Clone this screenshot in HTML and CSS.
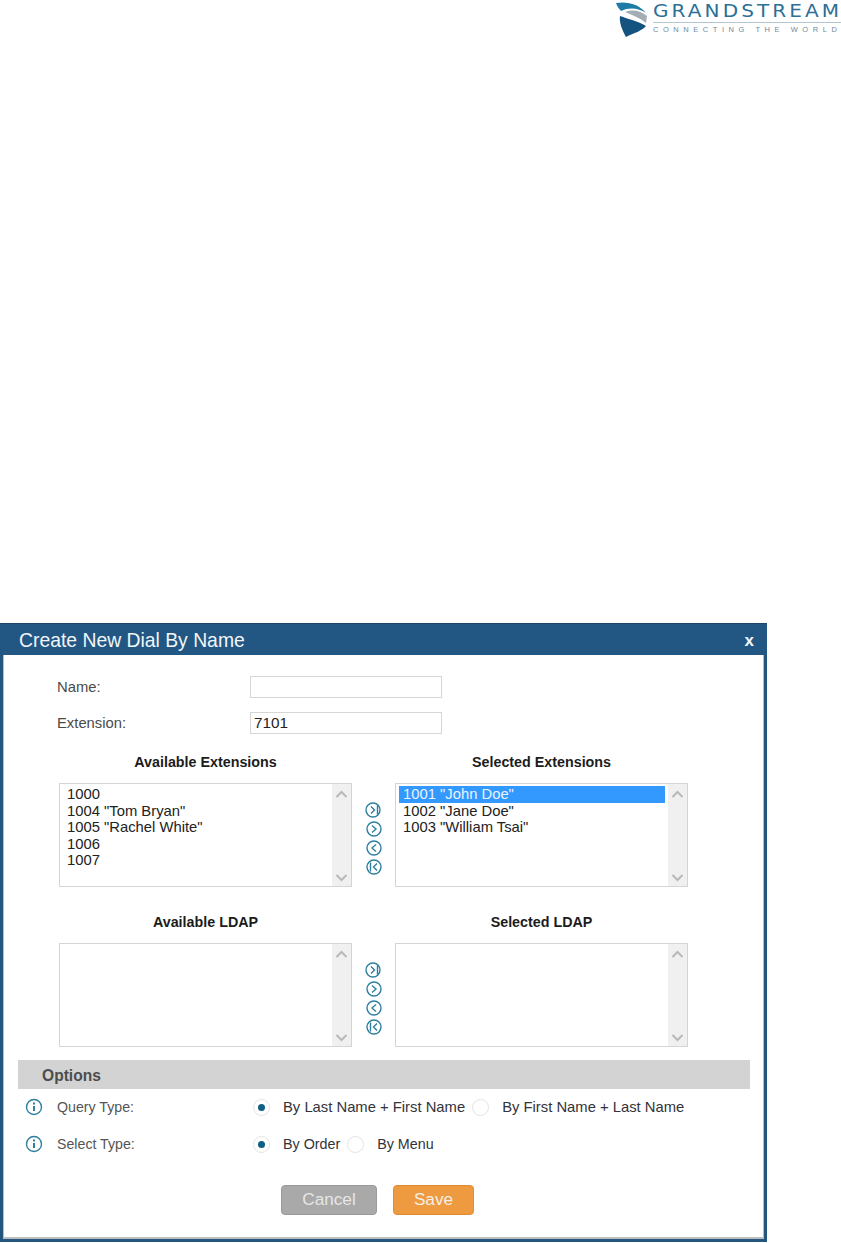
FILE: index.html
```html
<!DOCTYPE html>
<html lang="en">
<head>
<meta charset="utf-8">
<title>Create New Dial By Name</title>
<link rel="stylesheet" href="styles.css">
</head>
<body>
<header class="brand">
  <svg class="brand-mark" width="37" height="37" viewBox="0 0 37 37">
    <path d="M2 2 C13 0 25 3 32 12 C25 7 15 6 7 10 C5 8 3 5 2 2Z" fill="#1d7ba6"/>
    <path d="M11 11 C19 8 27 10 33 15 L32 22 C26 17 18 14 11 11Z" fill="#a3adb4"/>
    <path d="M6 15 C14 18 24 20 32 25 C28 30 20 32 12 36 C8 29 5 21 6 15Z" fill="#14527f"/>
  </svg>
  <div class="brand-text">
    <div class="brand-name">GRANDSTREAM</div>
    <div class="brand-rule"></div>
    <div class="brand-tag">CONNECTING THE WORLD</div>
  </div>
</header>

<main class="dialog">
  <div class="dialog-title">
    <span>Create New Dial By Name</span>
    <span class="dialog-close">x</span>
  </div>
  <div class="dialog-body">
    <div class="field"><label class="field-label">Name:</label><div class="text-input"></div></div>
    <div class="field"><label class="field-label">Extension:</label><div class="text-input">7101</div></div>

    <section class="transfer">
      <h3 class="transfer-title">Available Extensions</h3>
      <div></div>
      <h3 class="transfer-title">Selected Extensions</h3>
      <div class="listbox">
        <ul class="list">
          <li>1000</li><li>1004 "Tom Bryan"</li><li>1005 "Rachel White"</li><li>1006</li><li>1007</li>
        </ul>
        <div class="scrollbar">
          <svg width="17" height="104" viewBox="0 0 17 104"><path class="chev" d="M3.500 13 L8.500 8 L13.500 13M3.500 91 L8.500 96 L13.500 91"/></svg>
        </div>
      </div>
      <div class="movers">
        <svg width="18" height="18" viewBox="0 0 18 18"><circle class="mv" cx="8" cy="9" r="7"/><path class="mv" d="M6 5.500 L9.500 9 L6 12.500M12.500 4.500V13.500"/></svg>
        <svg width="18" height="18" viewBox="0 0 18 18"><circle class="mv" cx="9" cy="9" r="7"/><path class="mv" d="M7 5.500 L11 9 L7 12.500"/></svg>
        <svg width="18" height="18" viewBox="0 0 18 18"><circle class="mv" cx="9" cy="9" r="7"/><path class="mv" d="M11 5.500 L7 9 L11 12.500"/></svg>
        <svg width="18" height="18" viewBox="0 0 18 18"><circle class="mv" cx="9" cy="9" r="7"/><path class="mv" d="M12 5.500 L8.500 9 L12 12.500M5.500 4.500V13.500"/></svg>
      </div>
      <div class="listbox">
        <ul class="list">
          <li class="selected">1001 "John Doe"</li><li>1002 "Jane Doe"</li><li>1003 "William Tsai"</li>
        </ul>
        <div class="scrollbar">
          <svg width="17" height="104" viewBox="0 0 17 104"><path class="chev" d="M3.500 13 L8.500 8 L13.500 13M3.500 91 L8.500 96 L13.500 91"/></svg>
        </div>
      </div>
    </section>

    <section class="transfer transfer-ldap">
      <h3 class="transfer-title">Available LDAP</h3>
      <div></div>
      <h3 class="transfer-title">Selected LDAP</h3>
      <div class="listbox">
        <ul class="list"></ul>
        <div class="scrollbar">
          <svg width="17" height="104" viewBox="0 0 17 104"><path class="chev" d="M3.500 13 L8.500 8 L13.500 13M3.500 91 L8.500 96 L13.500 91"/></svg>
        </div>
      </div>
      <div class="movers">
        <svg width="18" height="18" viewBox="0 0 18 18"><circle class="mv" cx="8" cy="9" r="7"/><path class="mv" d="M6 5.500 L9.500 9 L6 12.500M12.500 4.500V13.500"/></svg>
        <svg width="18" height="18" viewBox="0 0 18 18"><circle class="mv" cx="9" cy="9" r="7"/><path class="mv" d="M7 5.500 L11 9 L7 12.500"/></svg>
        <svg width="18" height="18" viewBox="0 0 18 18"><circle class="mv" cx="9" cy="9" r="7"/><path class="mv" d="M11 5.500 L7 9 L11 12.500"/></svg>
        <svg width="18" height="18" viewBox="0 0 18 18"><circle class="mv" cx="9" cy="9" r="7"/><path class="mv" d="M12 5.500 L8.500 9 L12 12.500M5.500 4.500V13.500"/></svg>
      </div>
      <div class="listbox">
        <ul class="list"></ul>
        <div class="scrollbar">
          <svg width="17" height="104" viewBox="0 0 17 104"><path class="chev" d="M3.500 13 L8.500 8 L13.500 13M3.500 91 L8.500 96 L13.500 91"/></svg>
        </div>
      </div>
    </section>

    <div class="options-bar">Options</div>

    <div class="option-row option-row-first">
      <svg class="info" width="18" height="18" viewBox="0 0 18 18"><circle class="mv" cx="9" cy="9" r="7.500"/><path class="info-i" d="M9 8V13M9 4.500V6.500"/></svg>
      <span class="option-label">Query Type:</span>
      <span class="radio radio-on"></span><span class="radio-text">By Last Name + First Name</span>
      <span class="radio radio-second"></span><span class="radio-text radio-text-second">By First Name + Last Name</span>
    </div>
    <div class="option-row option-row-narrow">
      <svg class="info" width="18" height="18" viewBox="0 0 18 18"><circle class="mv" cx="9" cy="9" r="7.500"/><path class="info-i" d="M9 8V13M9 4.500V6.500"/></svg>
      <span class="option-label">Select Type:</span>
      <span class="radio radio-on"></span><span class="radio-text">By Order</span>
      <span class="radio radio-second"></span><span class="radio-text radio-text-second">By Menu</span>
    </div>

    <div class="actions">
      <div class="btn btn-cancel">Cancel</div>
      <div class="btn btn-save">Save</div>
    </div>
  </div>
</main>
</body>
</html>
```
FILE: styles.css
```css
* { box-sizing: border-box; }
html, body { margin: 0; padding: 0; }
body {
  width: 841px;
  height: 1243px;
  overflow: hidden;
  background: #fff;
  font-family: "Liberation Sans", Arial, sans-serif;
  color: #2a2a2a;
}

.brand {
  height: 623px;
  padding: 1px 0 0 614px;
  display: flex;
  align-items: flex-start;
  gap: 2px;
}
.brand-mark { flex: none; }
.brand-text { width: 188px; padding-top: 2px; }
.brand-name {
  font-family: "DejaVu Sans", sans-serif;
  font-size: 17px;
  line-height: 17px;
  letter-spacing: 2.6px;
  color: #2c6f97;
  white-space: nowrap;
  transform: scaleX(1.18);
  transform-origin: left center;
}
.brand-rule { height: 1px; margin: 2px 0 3px; width: 188px; background: #b5c6d0; }
.brand-tag {
  font-size: 7.500px;
  line-height: 8px;
  letter-spacing: 4.550px;
  color: #6f8a9a;
  white-space: nowrap;
}

.dialog {
  width: 767px;
  height: 619px;
  background: #fff;
  border: 3px solid #23557f;
  border-top: 0;
  border-bottom-width: 3px;
  box-shadow: inset 0 -2px 0 #bdbdbd, inset -1px 0 0 #bdbdbd, inset 1px 0 0 #bdbdbd;
}
.dialog-title {
  height: 32px;
  margin: 0 -3px;
  padding: 4px 13px 0 19px;
  background: #235783;
  border-top: 1px solid #1d4467;
  color: #f2f6f9;
  font-size: 19.350px;
  line-height: 24px;
  display: flex;
  justify-content: space-between;
}
.dialog-close { font-size: 17px; font-weight: bold; padding-top: 1px; }
.dialog-body { padding: 21px 0 0 15px; }

.field { display: flex; align-items: center; height: 21px; margin-bottom: 15px; }
.field-label { width: 232px; padding-left: 39px; font-size: 14.800px; color: #4a4a4a; }
.text-input {
  width: 192px;
  height: 22px;
  border: 1px solid #d6d6d6;
  padding-left: 3px;
  font-size: 15.300px;
  line-height: 19px;
  color: #222;
}

.transfer {
  display: grid;
  grid-template-columns: 293px 43px 293px;
  grid-template-rows: 38px 104px;
  margin: -3px 0 0 41px;
}
.transfer-ldap { margin-top: 18px; }
.transfer-title {
  margin: 0;
  font-size: 14.300px;
  font-weight: bold;
  color: #1c1c1c;
  text-align: center;
  line-height: 16px;
  padding-top: 9px;
}
.listbox { display: flex; border: 1px solid #d4d4d4; background: #fff; height: 104px; }
.list {
  flex: 1;
  margin: 0;
  padding: 2px 3px;
  list-style: none;
  font-size: 14.800px;
  line-height: 16.500px;
  color: #222;
}
.list li { padding-left: 4px; height: 16.500px; }
.list li.selected { background: #3399ff; color: #e8f3ff; }
.scrollbar { width: 19px; background: #f0f0f0; display: flex; justify-content: center; }
.chev { fill: none; stroke: #b8b8b8; stroke-width: 2; }

.movers {
  display: flex;
  flex-direction: column;
  align-items: center;
  gap: 1px;
  padding-top: 18px;
}
.mv { fill: none; stroke: #2f7f9f; stroke-width: 1.400; }

.options-bar {
  width: 732px;
  height: 29px;
  margin-top: 13px;
  padding-left: 24px;
  background: #d3d3d3;
  color: #4d4d4d;
  font-size: 15.600px;
  font-weight: bold;
  line-height: 31px;
}

.option-row {
  display: flex;
  align-items: center;
  height: 18px;
  margin-top: 19px;
  padding-left: 7px;
  font-size: 14.800px;
}
.option-row-first { margin-top: 9px; }
.option-row-narrow { font-size: 14.300px; }
.info { flex: none; }
.info-i { stroke: #2f7f9f; stroke-width: 2; fill: none; }
.option-label { width: 210px; padding-left: 14px; color: #555; flex: none; font-size: 14.200px; }
.radio {
  flex: none;
  width: 17px;
  height: 17px;
  border-radius: 50%;
  border: 1px solid #e3e3e3;
  background: #fff;
  position: relative;
}
.radio-on::after {
  content: "";
  position: absolute;
  left: 4px;
  top: 4px;
  width: 7px;
  height: 7px;
  border-radius: 50%;
  background: #0e5f85;
}
.radio-text { margin-left: 13px; color: #33333a; white-space: nowrap; }
.radio-second { margin-left: 7px; }
.radio-text-second { margin-left: 13px; }

.actions { display: flex; gap: 16px; margin: 32px 0 0 263px; }
.btn {
  height: 30px;
  border-radius: 4px;
  color: #f4efe6;
  font-size: 17.200px;
  line-height: 27px;
  text-align: center;
}
.btn-cancel { width: 96px; background: #a9a9a9; border: 1px solid #9a9a9a; color: #e6e6e6; }
.btn-save { width: 81px; background: #ee9a40; border: 1px solid #e08c34; }
```
